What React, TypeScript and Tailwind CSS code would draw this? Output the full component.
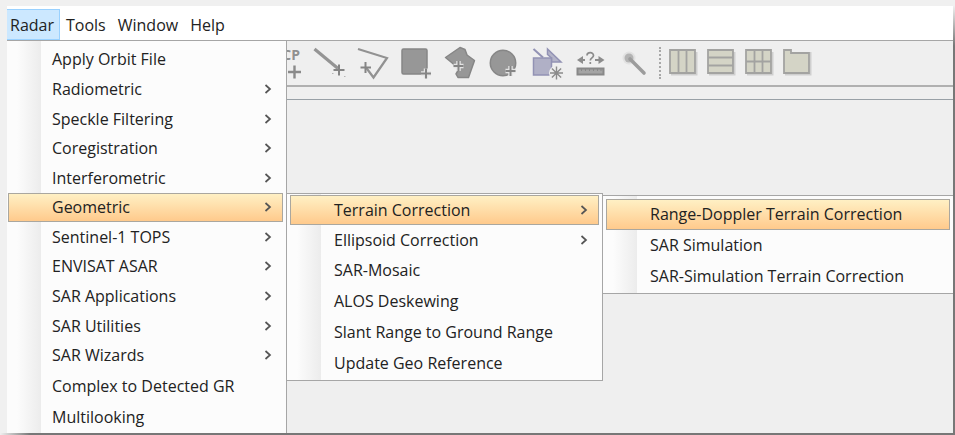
import { useState, type ReactNode } from 'react'

interface Item {
  label: string
  children?: Item[]
}

const RADAR_MENU: Item[] = [
  { label: 'Apply Orbit File' },
  { label: 'Radiometric', children: [] },
  { label: 'Speckle Filtering', children: [] },
  { label: 'Coregistration', children: [] },
  { label: 'Interferometric', children: [] },
  {
    label: 'Geometric',
    children: [
      {
        label: 'Terrain Correction',
        children: [
          { label: 'Range-Doppler Terrain Correction' },
          { label: 'SAR Simulation' },
          { label: 'SAR-Simulation Terrain Correction' },
        ],
      },
      { label: 'Ellipsoid Correction', children: [] },
      { label: 'SAR-Mosaic' },
      { label: 'ALOS Deskewing' },
      { label: 'Slant Range to Ground Range' },
      { label: 'Update Geo Reference' },
    ],
  },
  { label: 'Sentinel-1 TOPS', children: [] },
  { label: 'ENVISAT ASAR', children: [] },
  { label: 'SAR Applications', children: [] },
  { label: 'SAR Utilities', children: [] },
  { label: 'SAR Wizards', children: [] },
  { label: 'Complex to Detected GR' },
  { label: 'Multilooking' },
]

// One class set per nesting level
const MENU_CLASS = [
  'inset-y-0 left-0 w-[280px] border-r pt-0.5 pl-px pr-[3px]',
  'left-full top-0 ml-1 w-[316px] border-y border-r py-px px-[3px]',
  'left-full top-0 ml-1 w-[350px] border-y pt-[3px] pb-px px-[3px]',
]

function Menu({ items, level, path, onSelect }: {
  items: Item[]
  level: number
  path: string[]
  onSelect: (path: string[]) => void
}) {
  return (
    <ul
      role="menu"
      className={`absolute z-10 flex flex-col border-[#a6a6a6] bg-[#fcfcfc] bg-[linear-gradient(to_right,#fcfcfc_10px,#ececec)] bg-[length:34px_100%] bg-no-repeat ${MENU_CLASS[level]}`}
    >
      {items.map((item) => {
        const active = path[level] === item.label
        return (
          <li
            key={item.label}
            role="none"
            className={`relative flex grow ${item.children ? (level === 0 ? 'basis-[29px]' : 'basis-[30px]') : 'basis-[31px]'}`}
          >
            <button
              type="button"
              role="menuitem"
              aria-haspopup={item.children ? 'menu' : undefined}
              onClick={() => onSelect([...path.slice(0, level), item.label])}
              className={`flex w-full items-center justify-between border pl-[43px] pr-2.5 text-left whitespace-nowrap ${
                active
                  ? 'border-[#aaa79f] bg-linear-to-b from-[#fff0c4] to-[#ffca8c]'
                  : 'border-transparent'
              }`}
            >
              {item.label}
              {item.children && (
                <svg width="8" height="12" viewBox="0 0 8 12" fill="none" stroke="#555" strokeWidth="1.7">
                  <path d="M1.5 2 6 6l-4.500 4" />
                </svg>
              )}
            </button>
            {active && item.children && item.children.length > 0 && (
              <Menu items={item.children} level={level + 1} path={path} onSelect={onSelect} />
            )}
          </li>
        )
      })}
    </ul>
  )
}

// Plus sign with a light halo, so that it reads on top of a filled shape
function Plus({ x, y }: { x: number; y: number }) {
  const d = `M${x - 5} ${y}h10M${x} ${y - 5}v10`
  return (
    <>
      <path d={d} stroke="#e4e4e4" strokeWidth="4.5" />
      <path d={d} stroke="#858585" strokeWidth="2" />
    </>
  )
}

const DRAW_TOOLS: { name: string; art: ReactNode }[] = [
  {
    name: 'Line drawing tool',
    art: (
      <>
        <path d="M5.500 8 29 27.500" stroke="#949494" strokeWidth="3.2" />
        <path d="M24.500 29h11M30 23.500v11" stroke="#858585" strokeWidth="2" />
        <path d="M23 32.500h1.500M35 35.500h1.500" stroke="#b5b5b5" />
      </>
    ),
  },
  {
    name: 'Polyline drawing tool',
    art: (
      <>
        <path d="M6 8 35 17 21.500 36.500 14 26.500" stroke="#929292" strokeWidth="2.2" />
        <path d="M8.500 26.500h10.500M13.500 21v11" stroke="#858585" strokeWidth="2" />
      </>
    ),
  },
  {
    name: 'Rectangle drawing tool',
    art: (
      <>
        <rect x="7" y="8" width="25" height="25" rx="1.500" fill="#979797" stroke="#868686" strokeWidth="1.500" />
        <Plus x={31} y={32.500} />
      </>
    ),
  },
  {
    name: 'Polygon drawing tool',
    art: (
      <>
        <path d="M7.500 16.500 22 6.500 27 8.500l2 5.500 7.500 5.500-6 17H20l-2-3.500 3-5-8-7z" fill="#979797" stroke="#868686" strokeWidth="1.500" strokeLinejoin="round" />
        <Plus x={20.500} y={25} />
      </>
    ),
  },
  {
    name: 'Ellipse drawing tool',
    art: (
      <>
        <circle cx="22" cy="22" r="12.700" fill="#979797" stroke="#868686" strokeWidth="1.500" />
        <Plus x={29.500} y={30} />
      </>
    ),
  },
  {
    name: 'New vector data container',
    art: (
      <>
        <path d="M9.500 8 19 16.500" stroke="#9292b4" strokeWidth="2" />
        <path d="M23.500 8v5.500l4 3.500v4h9.500z" fill="#b4b4c8" stroke="#9292b4" strokeWidth="1.500" />
        <rect x="9.500" y="17" width="18" height="17" fill="#b0b0c6" stroke="#9292b4" strokeWidth="1.500" />
        <circle cx="32.500" cy="32" r="7.500" fill="#eee" />
        <path d="M32.500 25.500v13M26 32h13M27.900 27.400l9.200 9.200M37.100 27.400l-9.200 9.200" stroke="#8b8b8b" strokeWidth="1.400" />
      </>
    ),
  },
  {
    name: 'Range finder',
    art: (
      <>
        <path d="M13 19h5M28 19h5" stroke="#8c8c8c" strokeWidth="2" />
        <path d="M10 19l6-4v8zM37.500 19l-6-4v8z" fill="#8c8c8c" />
        <path d="M20 14.500c0-3.500 6.500-4 6.500 0 0 2.500-3.200 2.300-3.200 5M23.300 21v2" stroke="#8c8c8c" strokeWidth="1.700" />
        <rect x="10.500" y="27.500" width="26" height="6" fill="#a4a4a4" stroke="#888" strokeWidth="2" />
        <path d="M14.500 27v3M18.500 27v3M22.500 27v3M26.500 27v3M30.500 27v3M34 27v3" stroke="#888" />
      </>
    ),
  },
  {
    name: 'Magic wand',
    art: (
      <>
        <circle cx="19" cy="17" r="6.500" fill="#e2e2e2" />
        <circle cx="19" cy="17" r="4.500" fill="#b4b4b4" />
        <path d="M20 18 34 32" stroke="#9c9c9c" strokeWidth="3.6" strokeLinecap="round" />
      </>
    ),
  },
]

const LAYOUT_TOOLS = [
  { name: 'Tile vertically', d: 'M6 9h25v23H6zM14.500 9v23M22.500 9v23' },
  { name: 'Tile horizontally', d: 'M6 9h25v23H6zM6 16.500h25M6 24.500h25' },
  { name: 'Tile evenly', d: 'M6 9h25v23H6zM14.500 9v23M22.500 9v23M6 20.500h25' },
  { name: 'Tile single', d: 'M6 9h7v3h18v20H6z' },
]

function Toolbar() {
  return (
    <div role="toolbar" className="flex h-[46px] border-b-2 border-[#b0b0b0] pl-[272px]">
      <button type="button" aria-label="Ground control point tool">
        <svg width="30" height="44" viewBox="0 0 30 44" fill="none">
          <text x="21" y="19" textAnchor="end" fill="#909090" className="text-[14px] font-bold">CP</text>
          <path d="M9 31h13M15.500 24.500v13" stroke="#8a8a8a" strokeWidth="2.400" />
        </svg>
      </button>
      {DRAW_TOOLS.map((tool) => (
        <button key={tool.name} type="button" aria-label={tool.name}>
          <svg width="43" height="44" viewBox="0 0 43 44" fill="none">{tool.art}</svg>
        </button>
      ))}
      <div className="my-1.5 ml-1.5 mr-[3px] border-l-2 border-dotted border-[#a8a8a8]" />
      {LAYOUT_TOOLS.map((tool) => (
        <button key={tool.name} type="button" aria-label={tool.name}>
          <svg width="38" height="44" viewBox="0 0 38 44" fill="none">
            <path d="M7 33.500h25.500V11" stroke="#cfcfcf" strokeWidth="2" />
            <path d={tool.d} fill="#d4d4c6" stroke="#a3a3a1" strokeWidth="1.800" />
          </svg>
        </button>
      ))}
    </div>
  )
}

export default function App() {
  const [open, setOpen] = useState('Radar')
  const [path, setPath] = useState(['Geometric', 'Terrain Correction', 'Range-Doppler Terrain Correction'])

  return (
    <div className="flex min-h-screen overflow-hidden bg-[#f0f0f0] bg-[linear-gradient(to_right,#f0f0f0,#777_30px)] bg-[length:100%_2px] bg-bottom bg-no-repeat pt-1.5 pb-0.5 pl-[7px] font-['Open_Sans','Noto_Sans',sans-serif] text-base leading-5 text-[#222]">
      <div className="flex grow flex-col">
        <nav className="overflow-hidden bg-white">
          <div className="-ml-[3px] flex h-[34px] pt-[3px]">
            {['Radar', 'Tools', 'Window', 'Help'].map((name) => (
              <button
                key={name}
                type="button"
                onClick={() => setOpen(open === name ? '' : name)}
                className={`border px-[5px] ${open === name ? 'border-[#99d1ff] bg-[#cce8ff]' : 'border-transparent'}`}
              >
                {name}
              </button>
            ))}
          </div>
        </nav>
        <main className="relative grow border-t border-[#a6a6a6] bg-[#efefef]">
          <Toolbar />
          <div className="mt-3 border-t border-[#98a0a6]" />
          {open === 'Radar' && <Menu items={RADAR_MENU} level={0} path={path} onSelect={setPath} />}
        </main>
      </div>
      <div className="w-0.5 shrink-0 bg-linear-to-b from-[#f0f0f0] to-[#777] to-[40px]" />
    </div>
  )
}
